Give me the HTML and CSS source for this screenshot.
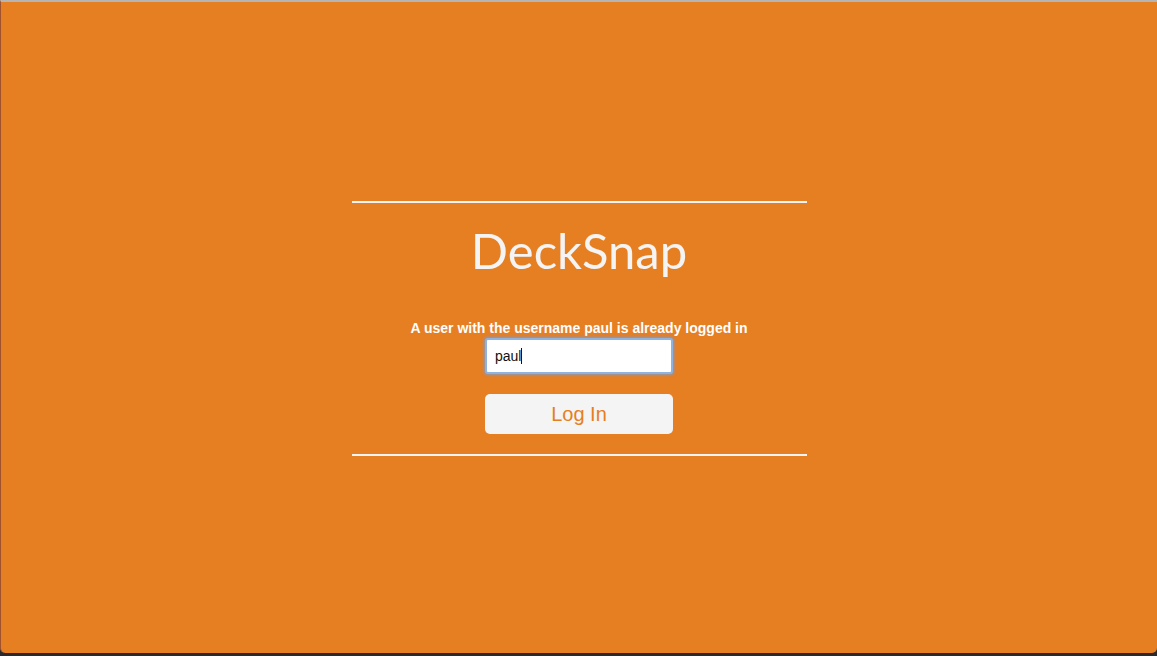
FILE: index.html
```html
<!DOCTYPE html>
<html lang="en">
<head>
<meta charset="utf-8">
<title>DeckSnap</title>
<link rel="stylesheet" href="styles.css">
</head>
<body>
<div class="window">
  <main class="login">
    <hr class="rule">
    <h1 class="brand">DeckSnap</h1>
    <p class="notice">A user with the username paul is already logged in</p>
    <label class="field">
      <input class="username" type="text" value="paul">
      <span class="caret"></span>
    </label>
    <button class="login-btn" type="button">Log In</button>
    <hr class="rule">
  </main>
</div>
<div class="dock"></div>
</body>
</html>
```
FILE: styles.css
```css
html, body {
  margin: 0;
  padding: 0;
  height: 100%;
}
body {
  background: #2a2a2e;
  display: flex;
  flex-direction: column;
  overflow: hidden;
}
.window {
  flex: 1;
  background: #e67e22;
  border-top: 2px solid #b5b5b5;
  border-left: 1px solid #a0522d;
  border-radius: 0 0 5px 5px;
  display: flex;
  justify-content: center;
}
.dock {
  height: 3px;
}
.login {
  width: 455px;
  margin-top: 199px;
  display: flex;
  flex-direction: column;
  align-items: center;
}
.rule {
  width: 100%;
  margin: 0;
  border: 0;
  border-top: 2px solid #f4f4f4;
}
.brand {
  margin: 17px 0 0;
  font-family: Lato, "Open Sans", sans-serif;
  font-weight: 400;
  font-size: 49px;
  line-height: 60px;
  color: #f4f4f4;
}
.notice {
  margin: 40px 0 0;
  font-family: "Liberation Sans", Arial, sans-serif;
  font-weight: bold;
  font-size: 14px;
  line-height: 16px;
  color: #ffffff;
}
.field {
  position: relative;
  display: block;
  margin-top: 2px;
}
.username {
  display: block;
  box-sizing: border-box;
  width: 188px;
  height: 36px;
  padding: 0 8px;
  border: 2px solid #8fb3e0;
  border-radius: 3px;
  box-shadow: 0 0 3px 1px rgba(110, 160, 230, 0.8);
  background: #ffffff;
  font-family: "Liberation Sans", Arial, sans-serif;
  font-size: 14px;
  color: #111111;
  outline: none;
}
.caret {
  position: absolute;
  left: 36px;
  top: 10px;
  width: 1px;
  height: 16px;
  background: #111111;
}
.login-btn {
  width: 188px;
  height: 40px;
  margin: 20px 0 20px;
  border: 0;
  border-radius: 5px;
  background: #f4f4f4;
  color: #e67e22;
  font-family: "Liberation Sans", Arial, sans-serif;
  font-size: 20px;
  cursor: pointer;
}
```
